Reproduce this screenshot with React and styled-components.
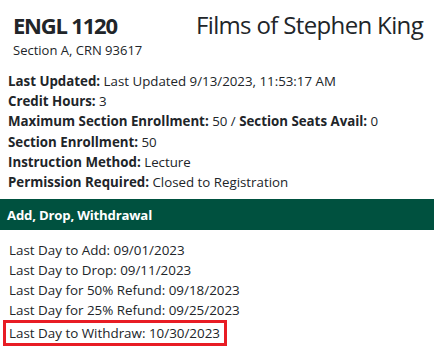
import React from "react";
import styled, { createGlobalStyle } from "styled-components";

const Global = createGlobalStyle`
  html, body { margin: 0; padding: 0; background: #fff; }
  body { font-family: "Open Sans", "Noto Sans", sans-serif; color: #212529; }
`;

const Page = styled.div`
  width: 434px;
  height: 351px;
  overflow: hidden;
`;

const Header = styled.div`
  display: flex;
  align-items: flex-start;
  padding: 10px 0 0 13px;
`;

const CourseBlock = styled.div`
  width: 183px;
`;

const Code = styled.div`
  font-size: 22px;
  font-weight: 700;
  line-height: 30px;
  letter-spacing: -1.2px;
`;

const Section = styled.div`
  font-size: 13px;
  line-height: 18px;
  margin-top: 1px;
`;

const Title = styled.div`
  font-size: 24px;
  line-height: 30px;
  letter-spacing: -0.65px;
`;

const Info = styled.div`
  padding: 12px 8px 0;
  display: flex;
  flex-direction: column;
`;

const Line = styled.div`
  font-size: 13.3px;
  line-height: 20.2px;
  b { font-weight: 700; }
`;

const Bar = styled.div`
  margin-top: 7px;
  background: #00513f;
  color: #fff;
  height: 31px;
  display: flex;
  align-items: center;
  padding-left: 7px;
  font-size: 13.2px;
  font-weight: 700;
  letter-spacing: -0.2px;
`;

const Dates = styled.div`
  padding: 10px 0 0 9px;
  display: flex;
  flex-direction: column;
`;

const DateLine = styled.div`
  font-size: 13.4px;
  line-height: 20px;
  align-self: flex-start;
  ${(p) =>
    p.$highlight &&
    `
    border: 3px solid #e81c24;
    margin-left: -6px;
    padding: 0 4px 0 3px;
  `}
`;

export default function App() {
  return (
    <Page>
      <Global />
      <Header>
        <CourseBlock>
          <Code>ENGL 1120</Code>
          <Section>Section A, CRN 93617</Section>
        </CourseBlock>
        <Title>Films of Stephen King</Title>
      </Header>
      <Info>
        <Line><b>Last Updated:</b> Last Updated 9/13/2023, 11:53:17 AM</Line>
        <Line><b>Credit Hours:</b> 3</Line>
        <Line><b>Maximum Section Enrollment:</b> 50 / <b>Section Seats Avail:</b> 0</Line>
        <Line><b>Section Enrollment:</b> 50</Line>
        <Line><b>Instruction Method:</b> Lecture</Line>
        <Line><b>Permission Required:</b> Closed to Registration</Line>
      </Info>
      <Bar>Add, Drop, Withdrawal</Bar>
      <Dates>
        <DateLine>Last Day to Add: 09/01/2023</DateLine>
        <DateLine>Last Day to Drop: 09/11/2023</DateLine>
        <DateLine>Last Day for 50% Refund: 09/18/2023</DateLine>
        <DateLine>Last Day for 25% Refund: 09/25/2023</DateLine>
        <DateLine $highlight>Last Day to Withdraw: 10/30/2023</DateLine>
      </Dates>
    </Page>
  );
}
